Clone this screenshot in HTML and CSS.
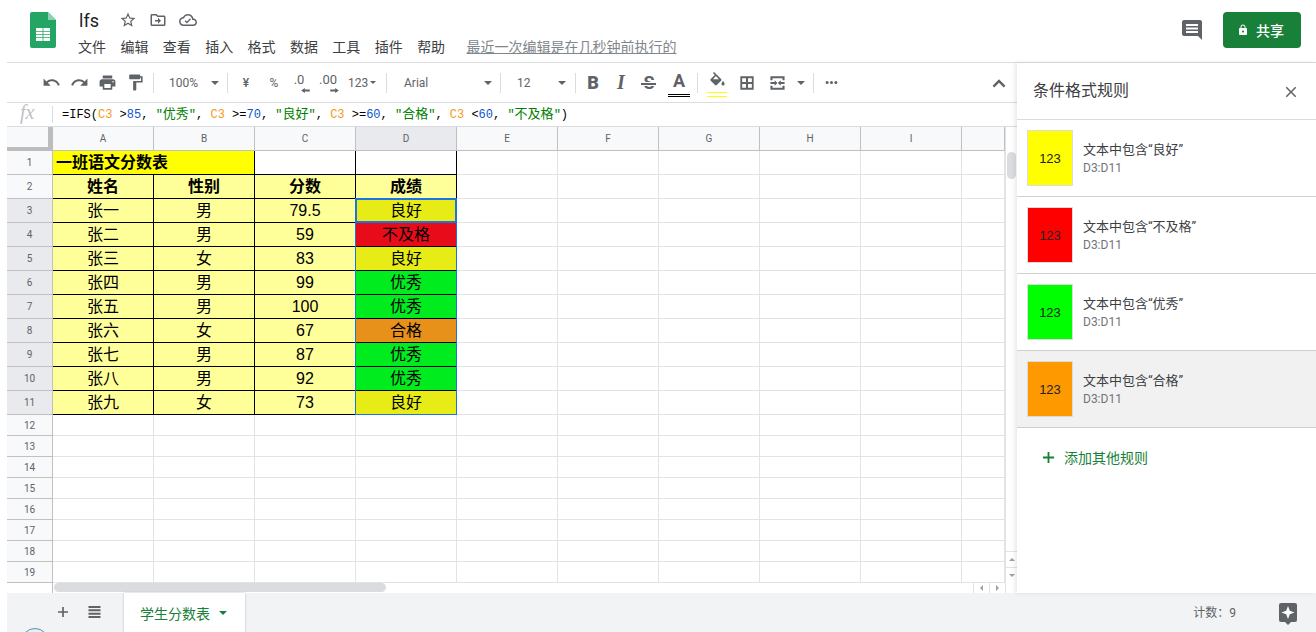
FILE: index.html
```html
<!DOCTYPE html>
<html lang="zh-CN">
<head>
    <meta charset="UTF-8">
    <meta name="viewport" content="width=device-width, initial-scale=1.0">
    <title>lfs</title>
    <link rel="stylesheet" href="styles.css">
</head>
<body>
    <header class="top">
        <svg class="logo" viewBox="0 0 26 36">
            <path fill="#23a566" d="M2 0h16l8 8v26a2 2 0 0 1-2 2H2a2 2 0 0 1-2-2V2a2 2 0 0 1 2-2z"/>
            <path fill="#8ed1b1" d="M18 0l8 8h-8z"/>
            <path fill="#fff" d="M6 16h6.600v3H6zm7.400 0H20v3h-6.600zM6 19.700h6.600v2.400H6zm7.400 0H20v2.400h-6.600zM6 22.800h6.600v2.400H6zm7.400 0H20v2.400h-6.600zM6 25.900h6.600V29H6zm7.400 0H20V29h-6.600z"/>
        </svg>
        <div class="doc">
            <div class="doc-title">
                <span class="doc-name">lfs</span>
                <svg class="doc-icon" viewBox="0 0 24 24"><path d="M22 9.24l-7.19-.62L12 2 9.19 8.63 2 9.24l5.46 4.73L5.82 21 12 17.27 18.18 21l-1.63-7.03L22 9.24zM12 15.4l-3.76 2.27 1-4.28-3.32-2.88 4.38-.38L12 6.1l1.71 4.04 4.38.38-3.32 2.88 1 4.28L12 15.4z"/></svg>
                <svg class="doc-icon" viewBox="0 0 24 24"><path d="M20 6h-8l-2-2H4c-1.1 0-2 .9-2 2v12c0 1.1.9 2 2 2h16c1.1 0 2-.9 2-2V8c0-1.1-.9-2-2-2zm0 12H4V6h5.2l2 2H20v10zm-8-1l4-4-4-4v3H8v2h4v3z"/></svg>
                <svg class="doc-icon" viewBox="0 0 24 24"><path d="M19.35 10.04C18.67 6.59 15.64 4 12 4 9.11 4 6.6 5.64 5.35 8.04 2.34 8.36 0 10.91 0 14c0 3.31 2.69 6 6 6h13c2.76 0 5-2.24 5-5 0-2.64-2.05-4.78-4.65-4.96zM19 18H6c-2.21 0-4-1.79-4-4s1.79-4 4-4h.71C7.37 7.69 9.48 6 12 6c3.04 0 5.5 2.46 5.5 5.5v.5H19c1.66 0 3 1.34 3 3s-1.34 3-3 3zm-8.5-1.5L7.5 13.5l1.2-1.2 1.8 1.8 4.3-4.3 1.2 1.2z"/></svg>
            </div>
            <nav class="menu">
                <span>文件</span><span>编辑</span><span>查看</span><span>插入</span><span>格式</span><span>数据</span><span>工具</span><span>插件</span><span>帮助</span>
                <a class="last-edit">最近一次编辑是在几秒钟前执行的</a>
            </nav>
        </div>
        <svg class="comment-icon" viewBox="0 0 24 24"><path d="M4 2h16a2 2 0 0 1 2 2v18l-4-4H4a2 2 0 0 1-2-2V4a2 2 0 0 1 2-2zm2 4v2h12V6zm0 3.5v2h12v-2zM6 13v2h12v-2z" fill-rule="evenodd"/></svg>
        <button class="share">
            <svg viewBox="0 0 24 24"><path d="M18 8h-1V6c0-2.76-2.24-5-5-5S7 3.24 7 6v2H6c-1.1 0-2 .9-2 2v10c0 1.1.9 2 2 2h12c1.1 0 2-.9 2-2V10c0-1.1-.9-2-2-2zm-6 9c-1.1 0-2-.9-2-2s.9-2 2-2 2 .9 2 2-.9 2-2 2zm3.1-9H8.9V6c0-1.71 1.39-3.1 3.1-3.1 1.71 0 3.1 1.39 3.1 3.1v2z"/></svg>
            共享
        </button>
    </header>

    <div class="main">
        <div class="work">
            <div class="toolbar">
                <div class="tb"><svg viewBox="0 0 24 24"><path d="M12.5 8c-2.65 0-5.05.99-6.9 2.6L2 7v9h9l-3.62-3.62c1.39-1.16 3.16-1.88 5.12-1.88 3.54 0 6.55 2.31 7.6 5.5l2.37-.78C21.08 11.03 17.15 8 12.5 8z"/></svg></div>
                <div class="tb"><svg viewBox="0 0 24 24"><path d="M18.4 10.6C16.55 8.99 14.15 8 11.5 8c-4.65 0-8.58 3.03-9.96 7.22L3.9 16c1.05-3.19 4.05-5.5 7.6-5.5 1.95 0 3.73.72 5.12 1.88L13 16h9V7l-3.6 3.6z"/></svg></div>
                <div class="tb"><svg viewBox="0 0 24 24"><path d="M19 8H5c-1.66 0-3 1.34-3 3v6h4v4h12v-4h4v-6c0-1.66-1.34-3-3-3zm-3 11H8v-5h8v5zm3-7c-.55 0-1-.45-1-1s.45-1 1-1 1 .45 1 1-.45 1-1 1zm-1-9H6v4h12V3z"/></svg></div>
                <div class="tb"><svg viewBox="0 0 24 24"><path d="M18 4V3c0-.55-.45-1-1-1H5c-.55 0-1 .45-1 1v4c0 .55.45 1 1 1h12c.55 0 1-.45 1-1V6h1v4H9v11c0 .55.45 1 1 1h2c.55 0 1-.45 1-1v-9h8V4h-3z"/></svg></div>
                <div class="sep sep-first"></div>
                <div class="tb-select tb-zoom"><span>100%</span><i class="caret"></i></div>
                <div class="sep"></div>
                <div class="tb tb-cny">¥</div>
                <div class="tb tb-pct">%</div>
                <div class="tb tb-dec">.0<svg class="dec-arrow" viewBox="0 0 12 7"><path d="M0 3.5L5 0v2.250h7v2.500H5V7z"/></svg></div>
                <div class="tb tb-inc">.00<svg class="dec-arrow" viewBox="0 0 12 7"><path d="M12 3.5L7 0v2.250H0v2.500h7V7z"/></svg></div>
                <div class="tb tb-num">123<i class="caret caret-small"></i></div>
                <div class="sep"></div>
                <div class="tb-select tb-font"><span>Arial</span><i class="caret"></i></div>
                <div class="sep"></div>
                <div class="tb-select tb-size"><span>12</span><i class="caret"></i></div>
                <div class="sep"></div>
                <div class="tb tb-letter tb-bold">B</div>
                <div class="tb tb-letter tb-italic">I</div>
                <div class="tb tb-letter tb-strike">S</div>
                <div class="tb tb-letter tb-color">A</div>
                <div class="sep sep-after-color"></div>
                <div class="tb tb-fill">
                    <svg viewBox="0 0 24 24"><path d="M16.56 8.94L7.62 0 6.21 1.41l2.38 2.38-5.15 5.15c-.59.59-.59 1.54 0 2.12l5.5 5.5c.29.29.68.44 1.06.44s.77-.15 1.06-.44l5.5-5.5c.59-.58.59-1.53 0-2.12zM19 11.5s-2 2.17-2 3.5c0 1.1.9 2 2 2s2-.9 2-2c0-1.33-2-3.5-2-3.5z"/><path fill="#fff" d="M10 5.2L13.800 9H6.200z"/></svg>
                </div>
                <div class="tb tb-borders"><svg viewBox="0 0 24 24"><path fill-rule="evenodd" d="M2 2h20v20H2zm2.750 2.750v5.750h5.750V4.750zm8.750 0v5.750h5.750V4.750zm-8.750 8.750v5.750h5.750V13.500zm8.750 0v5.750h5.750V13.500z"/></svg></div>
                <div class="tb tb-merge"><svg viewBox="0 0 24 24" preserveAspectRatio="none"><path d="M2 2h20v6h-3V5H5v3H2zm0 14h3v3h14v-3h3v6H2zm0-5.500h6V8l4 4-4 4v-2.500H2zm20 0h-5.500V8l-4 4 4 4v-2.500H22z"/></svg></div>
                <div class="tb tb-merge-caret"><i class="caret"></i></div>
                <div class="sep sep-after-merge"></div>
                <div class="tb tb-more"><svg viewBox="0 0 24 24"><circle cx="5" cy="12" r="2.4"/><circle cx="12" cy="12" r="2.4"/><circle cx="19" cy="12" r="2.4"/></svg></div>
                <div class="tb tb-collapse"><svg viewBox="0 0 24 24"><path d="M12 8l-7 7 1.800 1.800L12 11.600l5.200 5.200L19 15z"/></svg></div>
            </div>

            <div class="formula-bar">
                <span class="fx">fx</span>
                <span class="formula-sep"></span>
                <code class="formula">=IFS(<span class="f-ref">C3</span> &gt;<span class="f-num">85</span>, <span class="f-str">"<span class="f-cjk">优秀</span>"</span>, <span class="f-ref">C3</span> &gt;=<span class="f-num">70</span>, <span class="f-str">"<span class="f-cjk">良好</span>"</span>, <span class="f-ref">C3</span> &gt;=<span class="f-num">60</span>, <span class="f-str">"<span class="f-cjk">合格</span>"</span>, <span class="f-ref">C3</span> &lt;<span class="f-num">60</span>, <span class="f-str">"<span class="f-cjk">不及格</span>"</span>)</code>
            </div>

            <div class="sheet-body">
                <div class="table-wrap">
                    <table class="grid">
                        <colgroup>
                            <col class="col-head"><col class="col"><col class="col"><col class="col"><col class="col"><col class="col"><col class="col"><col class="col"><col class="col"><col class="col"><col class="col-last">
                        </colgroup>
                        <tr class="head-row"><th class="corner"></th><th>A</th><th>B</th><th>C</th><th class="sel-col">D</th><th>E</th><th>F</th><th>G</th><th>H</th><th>I</th><th></th></tr>
                        <tr class="tall"><th>1</th><td colspan="2" class="title-cell inked">一班语文分数表</td><td class="inked blank"></td><td class="inked blank"></td><td></td><td></td><td></td><td></td><td></td><td></td></tr>
                        <tr class="tall"><th>2</th><td class="inked pale bold">姓名</td><td class="inked pale bold">性别</td><td class="inked pale bold">分数</td><td class="inked pale bold">成绩</td><td></td><td></td><td></td><td></td><td></td><td></td></tr>
                        <tr class="tall"><th class="sel-row">3</th><td class="inked pale">张一</td><td class="inked pale">男</td><td class="inked pale">79.5</td><td class="inked good">良好</td><td></td><td></td><td></td><td></td><td></td><td></td></tr>
                        <tr class="tall"><th class="sel-row">4</th><td class="inked pale">张二</td><td class="inked pale">男</td><td class="inked pale">59</td><td class="inked fail">不及格</td><td></td><td></td><td></td><td></td><td></td><td></td></tr>
                        <tr class="tall"><th class="sel-row">5</th><td class="inked pale">张三</td><td class="inked pale">女</td><td class="inked pale">83</td><td class="inked good">良好</td><td></td><td></td><td></td><td></td><td></td><td></td></tr>
                        <tr class="tall"><th class="sel-row">6</th><td class="inked pale">张四</td><td class="inked pale">男</td><td class="inked pale">99</td><td class="inked top-grade">优秀</td><td></td><td></td><td></td><td></td><td></td><td></td></tr>
                        <tr class="tall"><th class="sel-row">7</th><td class="inked pale">张五</td><td class="inked pale">男</td><td class="inked pale">100</td><td class="inked top-grade">优秀</td><td></td><td></td><td></td><td></td><td></td><td></td></tr>
                        <tr class="tall"><th class="sel-row">8</th><td class="inked pale">张六</td><td class="inked pale">女</td><td class="inked pale">67</td><td class="inked pass">合格</td><td></td><td></td><td></td><td></td><td></td><td></td></tr>
                        <tr class="tall"><th class="sel-row">9</th><td class="inked pale">张七</td><td class="inked pale">男</td><td class="inked pale">87</td><td class="inked top-grade">优秀</td><td></td><td></td><td></td><td></td><td></td><td></td></tr>
                        <tr class="tall"><th class="sel-row">10</th><td class="inked pale">张八</td><td class="inked pale">男</td><td class="inked pale">92</td><td class="inked top-grade">优秀</td><td></td><td></td><td></td><td></td><td></td><td></td></tr>
                        <tr class="tall"><th class="sel-row">11</th><td class="inked pale">张九</td><td class="inked pale">女</td><td class="inked pale">73</td><td class="inked good">良好</td><td></td><td></td><td></td><td></td><td></td><td></td></tr>
                        <tr><th>12</th><td></td><td></td><td></td><td></td><td></td><td></td><td></td><td></td><td></td><td></td></tr>
                        <tr><th>13</th><td></td><td></td><td></td><td></td><td></td><td></td><td></td><td></td><td></td><td></td></tr>
                        <tr><th>14</th><td></td><td></td><td></td><td></td><td></td><td></td><td></td><td></td><td></td><td></td></tr>
                        <tr><th>15</th><td></td><td></td><td></td><td></td><td></td><td></td><td></td><td></td><td></td><td></td></tr>
                        <tr><th>16</th><td></td><td></td><td></td><td></td><td></td><td></td><td></td><td></td><td></td><td></td></tr>
                        <tr><th>17</th><td></td><td></td><td></td><td></td><td></td><td></td><td></td><td></td><td></td><td></td></tr>
                        <tr><th>18</th><td></td><td></td><td></td><td></td><td></td><td></td><td></td><td></td><td></td><td></td></tr>
                        <tr><th>19</th><td></td><td></td><td></td><td></td><td></td><td></td><td></td><td></td><td></td><td></td></tr>
                    </table>
                    <div class="range-outline"></div>
                    <div class="active-cell"></div>
                </div>
                <div class="vscroll">
                    <div class="vthumb"></div>
                    <div class="scroll-btn"><i class="mini-up"></i></div>
                    <div class="scroll-btn"><i class="mini-down"></i></div>
                </div>
            </div>
            <div class="hscroll">
                <div class="hscroll-head"></div>
                <div class="htrack"><div class="hthumb"></div></div>
                <div class="hbtn"><i class="mini-left"></i></div>
                <div class="hbtn"><i class="mini-right"></i></div>
                <div class="hcorner"></div>
            </div>
        </div>

        <aside class="panel">
            <div class="panel-head">
                <span>条件格式规则</span>
                <svg viewBox="0 0 24 24"><path d="M19 6.410L17.590 5 12 10.590 6.410 5 5 6.410 10.590 12 5 17.590 6.410 19 12 13.410 17.590 19 19 17.590 13.410 12z"/></svg>
            </div>
            <div class="rule">
                <div class="swatch sw-yellow">123</div>
                <div class="rule-text"><div class="rule-name">文本中包含“良好”</div><div class="rule-range">D3:D11</div></div>
            </div>
            <div class="rule">
                <div class="swatch sw-red">123</div>
                <div class="rule-text"><div class="rule-name">文本中包含“不及格”</div><div class="rule-range">D3:D11</div></div>
            </div>
            <div class="rule">
                <div class="swatch sw-green">123</div>
                <div class="rule-text"><div class="rule-name">文本中包含“优秀”</div><div class="rule-range">D3:D11</div></div>
            </div>
            <div class="rule rule-hover">
                <div class="swatch sw-orange">123</div>
                <div class="rule-text"><div class="rule-name">文本中包含“合格”</div><div class="rule-range">D3:D11</div></div>
            </div>
            <div class="add-rule">
                <svg viewBox="0 0 12 12"><path d="M5 0h2v5h5v2H7v5H5V7H0V5h5z"/></svg>
                <span>添加其他规则</span>
            </div>
        </aside>
    </div>

    <footer class="tabs">
        <svg class="tab-icon tab-plus" viewBox="0 0 12 12"><path d="M5 0h2v5h5v2H7v5H5V7H0V5h5z"/></svg>
        <svg class="tab-icon tab-list" viewBox="0 0 12 12"><path d="M0 0h12v2H0zm0 3.300h12v2H0zm0 3.400h12v2H0zM0 10h12v2H0z"/></svg>
        <div class="tab">学生分数表<i class="caret caret-green"></i></div>
        <span class="count">计数：9</span>
        <svg class="explore" viewBox="0 0 18 22"><path fill="#5f6368" d="M2 0h14a2 2 0 0 1 2 2v15a2 2 0 0 1-2 2h-4l-3 3-3-3H2a2 2 0 0 1-2-2V2a2 2 0 0 1 2-2z"/><path fill="#fff" d="M9 3l1.800 4.700L15.500 9.500l-4.700 1.800L9 16l-1.800-4.700L2.500 9.500l4.700-1.800z"/></svg>
    </footer>
    <div class="avatar-edge"></div>
</body>
</html>
```
FILE: styles.css
```css
* {
    box-sizing: border-box;
}
html, body {
    height: 100%;
}
body {
    margin: 0;
    height: 632px;
    overflow: hidden;
    position: relative;
    display: flex;
    flex-direction: column;
    font-family: Roboto, "Liberation Sans", "Noto Sans CJK SC", sans-serif;
    color: #202124;
    background: #fff;
}

/* top bar */
.top {
    height: 63px;
    flex: none;
    display: flex;
    align-items: flex-start;
    margin-left: 7px;
    border-bottom: 1px solid #dadce0;
}
.logo {
    width: 26px;
    height: 36px;
    margin: 12px 0 0 23px;
    flex: none;
}
.doc {
    margin-left: 23px;
    flex: 1;
}
.doc-title {
    display: flex;
    align-items: center;
    height: 22px;
    margin-top: 9px;
}
.doc-name {
    font-size: 18px;
    width: 40px;
}
.doc-icon {
    width: 18px;
    height: 18px;
    margin-right: 12px;
    fill: #5f6368;
}
.menu {
    display: flex;
    align-items: center;
    height: 20px;
    margin: 5px 0 0 -1px;
    font-size: 14px;
    color: #3c4043;
}
.menu span {
    width: 42.4px;
}
.last-edit {
    margin-left: 7px;
    color: #80868b;
    text-decoration: underline;
}
.comment-icon {
    width: 24px;
    height: 24px;
    margin: 18px 19px 0 0;
    fill: #5f6368;
}
.share {
    width: 78px;
    height: 36px;
    margin: 12px 15px 0 0;
    border: 0;
    border-radius: 4px;
    background: #188038;
    color: #fff;
    font: 500 14px Roboto, "Noto Sans CJK SC", sans-serif;
    display: flex;
    align-items: center;
    justify-content: center;
    gap: 7px;
    padding: 0 3px 0 0;
}
.share svg {
    width: 12px;
    height: 12px;
    fill: #fff;
}

.main {
    flex: 1;
    display: flex;
    min-height: 0;
    padding-left: 7px;
}
.work {
    flex: 1;
    min-width: 0;
    display: flex;
    flex-direction: column;
}

/* toolbar */
.toolbar {
    height: 40px;
    flex: none;
    display: flex;
    align-items: center;
    padding-left: 30px;
    border-bottom: 1px solid #dadce0;
    color: #5f6368;
    font-size: 12px;
}
.tb {
    width: 28px;
    height: 24px;
    flex: none;
    display: flex;
    align-items: center;
    justify-content: center;
    position: relative;
}
.tb svg {
    width: 19px;
    height: 19px;
    fill: #5f6368;
}
.sep {
    width: 1px;
    height: 20px;
    flex: none;
    background: #dadce0;
}
.sep-first {
    margin-left: 4px;
}
.sep-after-color {
    margin-left: 5px;
}
.sep-after-merge {
    margin-left: 7px;
}
.caret {
    display: inline-block;
    width: 0;
    height: 0;
    border-left: 4.5px solid transparent;
    border-right: 4.5px solid transparent;
    border-top: 4.5px solid #5f6368;
}
.caret-small {
    border-left-width: 3.5px;
    border-right-width: 3.5px;
    border-top-width: 3.5px;
    margin-left: 2px;
}
.tb-select {
    height: 24px;
    flex: none;
    display: flex;
    align-items: center;
    justify-content: space-between;
}
.tb-zoom {
    width: 73px;
    padding: 0 8px 0 15px;
}
.tb-font {
    width: 113px;
    padding: 0 8px 0 17px;
}
.tb-size {
    width: 74px;
    padding: 0 9px 0 16px;
}
.tb-cny {
    width: 36px;
    font-weight: 500;
}
.tb-pct {
    width: 20px;
}
.tb-dec {
    width: 30px;
    font-size: 13px;
    padding-bottom: 7px;
}
.tb-inc {
    width: 28px;
    font-size: 13px;
    padding-bottom: 7px;
}
.tb .dec-arrow {
    position: absolute;
    width: 9px;
    height: 5px;
    bottom: 2px;
    right: 4px;
}
.tb-inc .dec-arrow {
    right: 3px;
}
.tb-num {
    width: 44px;
    font-size: 12px;
    justify-content: flex-start;
    padding-left: 6px;
}
.tb-letter {
    font-size: 18px;
}
.tb-bold {
    width: 34px;
    font-weight: 900;
}
.tb-italic {
    width: 22px;
    font-family: "Liberation Serif", serif;
    font-size: 20px;
    font-style: italic;
    font-weight: 700;
}
.tb-strike {
    width: 34px;
    font-weight: 700;
}
.tb-strike::after {
    content: "";
    position: absolute;
    left: 9px;
    right: 10px;
    top: 12px;
    height: 2px;
    background: #5f6368;
    box-shadow: 0 0 0 1px #fff;
}
.tb-color {
    width: 22px;
    height: 24px;
    margin: 4px 2px 0;
    padding-bottom: 5px;
    font-weight: 700;
    border-bottom: 3px double #000;
}
.tb-fill {
    width: 38px;
    height: 25px;
    align-items: flex-start;
    margin-top: 3px;
}
.tb-fill::after {
    content: "";
    position: absolute;
    left: 9px;
    right: 9px;
    bottom: 0;
    height: 3px;
    border-top: 1px solid #ffff00;
    border-bottom: 1px solid #ffff00;
}
.tb-borders {
    width: 22px;
}
.tb-borders svg {
    width: 16px;
    height: 16px;
}
.tb-merge {
    width: 38px;
}
.tb .tb-merge-icon, .tb-merge svg {
    width: 17px;
    height: 16px;
}
.tb-merge-caret {
    width: 10px;
}
.tb-more {
    width: 34px;
}
.tb-more svg {
    width: 15px;
}
.tb-collapse {
    margin: 0 4px 0 auto;
}
.tb-collapse svg {
    width: 22px;
    height: 22px;
}

/* formula bar */
.formula-bar {
    height: 24px;
    flex: none;
    display: flex;
    align-items: center;
    border-bottom: 1px solid #dadce0;
}
.fx {
    width: 45px;
    margin-bottom: 4px;
    padding-left: 13px;
    font: italic 20px "Liberation Serif", serif;
    color: #bdc1c6;
}
.formula-sep {
    width: 1px;
    height: 17px;
    background: #dadce0;
}
.formula {
    margin: 0 0 4px 9px;
    font: 12px "Liberation Mono", "Noto Sans CJK SC", monospace;
    color: #000;
    white-space: pre;
}
.f-ref {
    color: #f7981d;
}
.f-num {
    color: #1155cc;
}
.f-str {
    color: #008000;
}
.f-cjk {
    font-size: 13px;
}

/* grid */
.sheet-body {
    height: 456px;
    flex: none;
    display: flex;
}
.table-wrap {
    width: 998px;
    flex: none;
    position: relative;
    overflow: hidden;
}
.grid {
    border-collapse: separate;
    border-spacing: 0;
    table-layout: fixed;
    width: 998px;
}
.col-head {
    width: 46px;
}
.col {
    width: 101px;
}
.col-last {
    width: 43px;
}
.grid tr {
    height: 21px;
}
.grid tr.tall, .grid tr.head-row {
    height: 24px;
}
.grid td, .grid th {
    padding: 0;
    overflow: hidden;
    white-space: nowrap;
    text-align: center;
    line-height: 1;
}
.grid td {
    border-right: 1px solid #e2e3e3;
    border-bottom: 1px solid #e2e3e3;
    font-size: 16px;
    color: #000;
    font-family: "Liberation Sans", "Noto Sans CJK SC", sans-serif;
}
.grid th {
    border-right: 1px solid #c0c0c0;
    border-bottom: 1px solid #c0c0c0;
    background: #f8f9fa;
    font: 400 10px Roboto, "Liberation Sans", sans-serif;
    color: #5f6368;
}
.grid th.corner {
    border-right: 5px solid #bdbdbd;
    border-bottom: 4px solid #bdbdbd;
}
.grid th.sel-col, .grid th.sel-row {
    background: #e8eaed;
}
.grid td.inked {
    border-right-color: #000;
    border-bottom-color: #000;
}
.pale {
    background: #ffff99;
}
.bold {
    font-weight: 700;
}
.grid td.title-cell {
    background: #ffff00;
    font-weight: 700;
    text-align: left;
    padding-left: 3px;
}
.blank {
    background: #fff;
}
.good {
    background: #e7ec16;
}
.fail {
    background: #e80c1a;
}
.top-grade {
    background: #00ec1f;
}
.pass {
    background: #e8911a;
}
.range-outline {
    position: absolute;
    left: 348px;
    top: 71px;
    width: 102px;
    height: 217px;
    border: 1px solid #1a73e8;
}
.active-cell {
    position: absolute;
    left: 348px;
    top: 71px;
    width: 102px;
    height: 25px;
    border: 2px solid #1a73e8;
}

/* scrollbars */
.vscroll {
    width: 12px;
    flex: none;
    display: flex;
    flex-direction: column;
    background: #fff;
    border-left: 1px solid #e2e3e3;
}
.vthumb {
    width: 9px;
    height: 27px;
    margin: 25px 0 0 1px;
    border-radius: 5px;
    background: #dadce0;
}
.scroll-btn {
    height: 16px;
    border-top: 1px solid #e2e3e3;
    display: flex;
    align-items: center;
    justify-content: center;
}
.vthumb + .scroll-btn {
    margin-top: auto;
}
.mini-up, .mini-down, .mini-left, .mini-right {
    display: block;
    width: 0;
    height: 0;
    border: 3px solid transparent;
}
.mini-up {
    border-bottom-color: #9aa0a6;
    border-top-width: 0;
}
.mini-down {
    border-top-color: #9aa0a6;
    border-bottom-width: 0;
}
.mini-left {
    border-right-color: #9aa0a6;
    border-left-width: 0;
}
.mini-right {
    border-left-color: #9aa0a6;
    border-right-width: 0;
}
.hscroll {
    height: 10px;
    flex: none;
    display: flex;
    background: #fff;
}
.hscroll-head {
    width: 46px;
    flex: none;
    border-right: 1px solid #c0c0c0;
}
.htrack {
    flex: 1;
    padding-left: 1px;
}
.hthumb {
    width: 332px;
    height: 9px;
    border-radius: 5px;
    background: #dadce0;
}
.hbtn {
    width: 16px;
    flex: none;
    border-left: 1px solid #e2e3e3;
    display: flex;
    align-items: center;
    justify-content: center;
}
.hcorner {
    width: 12px;
    flex: none;
    border-left: 1px solid #e2e3e3;
}

/* side panel */
.panel {
    width: 299px;
    flex: none;
    background: #fff;
    box-shadow: -2px 0 4px rgba(60, 64, 67, .12);
    position: relative;
}
.panel-head {
    height: 57px;
    display: flex;
    align-items: center;
    justify-content: space-between;
    padding: 0 16px;
    border-bottom: 1px solid #dadce0;
    font-size: 16px;
    color: #3c4043;
}
.panel-head span {
    margin-bottom: 4px;
}
.panel-head svg {
    width: 18px;
    height: 18px;
    margin-top: 2px;
    fill: #5f6368;
}
.rule {
    height: 77px;
    display: flex;
    align-items: center;
    gap: 10px;
    padding-left: 10px;
    border-bottom: 1px solid #cfcfcf;
}
.rule-hover {
    background: #f1f1f1;
}
.swatch {
    width: 46px;
    height: 56px;
    flex: none;
    display: flex;
    align-items: center;
    justify-content: center;
    border: 1px solid #dadce0;
    font: 13px "Liberation Sans", sans-serif;
    color: #222;
}
.sw-yellow {
    background: #ffff00;
}
.sw-red {
    background: #ff0000;
}
.sw-green {
    background: #00ff00;
}
.sw-orange {
    background: #ff9900;
}
.rule-text {
    padding-top: 2px;
}
.rule-name {
    font-size: 13px;
    color: #3c4043;
    line-height: 18px;
}
.rule-range {
    font-size: 12px;
    color: #70757a;
    line-height: 18px;
}
.add-rule {
    display: flex;
    align-items: center;
    gap: 10px;
    padding: 19px 0 0 26px;
    font-size: 14px;
    color: #188038;
}
.add-rule svg {
    width: 11px;
    height: 11px;
    fill: #188038;
}

/* sheet tabs */
.tabs {
    height: 39px;
    flex: none;
    margin-left: 7px;
    background: #f1f3f4;
    display: flex;
    align-items: flex-start;
}
.tab-icon {
    width: 10px;
    height: 10px;
    margin-top: 14px;
    fill: #5f6368;
}
.tab-plus {
    margin-left: 51px;
}
.tab-list {
    width: 13px;
    height: 12px;
    margin: 13px 0 0 20px;
    fill: #5f6368;
}
.tab {
    width: 121px;
    height: 39px;
    margin-left: 23px;
    padding-left: 16px;
    display: flex;
    align-items: center;
    gap: 9px;
    background: #fff;
    font-size: 14px;
    color: #188038;
    box-shadow: 0 0 2px rgba(60, 64, 67, .35);
}
.caret-green {
    border-top-color: #188038;
}
.count {
    margin: 10px 0 0 auto;
    font-family: Roboto, "Noto Sans CJK TC", sans-serif;
    font-size: 12px;
    color: #5f6368;
}
.explore {
    width: 18px;
    height: 22px;
    margin: 10px 19px 0 43px;
}
.avatar-edge {
    position: absolute;
    left: 21px;
    top: 628px;
    width: 28px;
    height: 28px;
    border: 1px solid #5b8fb0;
    border-radius: 50%;
    background: #e8f0f4;
}
```
